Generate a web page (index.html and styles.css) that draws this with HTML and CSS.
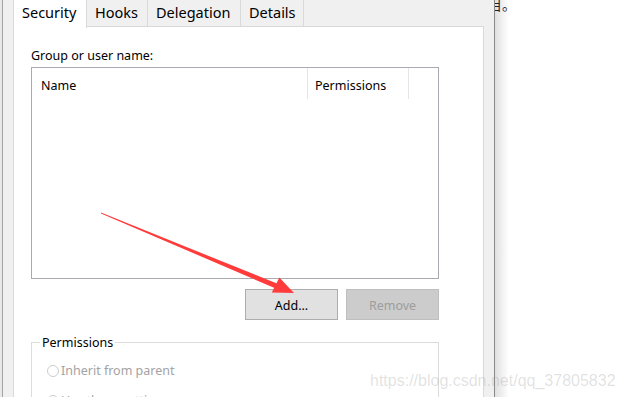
FILE: index.html
```html
<!DOCTYPE html>
<html lang="en">
<head>
<meta charset="utf-8">
<title>Security</title>
<link rel="stylesheet" href="styles.css">
</head>
<body>
<div class="screen">
  <div class="window">
    <div class="tabs">
      <div class="tab tab-active">Security</div>
      <div class="tab">Hooks</div>
      <div class="tab">Delegation</div>
      <div class="tab">Details</div>
    </div>
    <div class="panel">
      <div class="label">Group or user name:</div>
      <div class="listbox">
        <div class="list-header">
          <div class="col col-name">Name</div>
          <div class="col col-perm">Permissions</div>
          <div class="col col-rest"></div>
        </div>
      </div>
      <div class="buttons">
        <button class="btn">Add...</button>
        <button class="btn btn-disabled" disabled>Remove</button>
      </div>
      <fieldset class="group">
        <legend>Permissions</legend>
        <div class="radio-row"><span class="radio"></span><span>Inherit from parent</span></div>
        <div class="radio-row"><span class="radio"></span><span>Use these settings</span></div>
      </fieldset>
    </div>
  </div>
  <div class="outside">
    <div class="doc-text">目。</div>
  </div>
  <svg class="arrow" width="622" height="397" viewBox="0 0 622 397">
    <polygon fill="#ff3b3b" points="101,212.6 101,213.4 277.5,289.3 279.5,284.5"/>
    <polygon fill="#ff3b3b" points="294,293 271.8,292.4 279.4,277.6"/>
  </svg>
  <div class="watermark">https://blog.csdn.net/qq_37805832</div>
</div>
</body>
</html>
```

FILE: styles.css
```css
* { box-sizing: border-box; }
html, body { margin: 0; padding: 0; background: #fff; }
.screen {
  position: relative;
  width: 622px;
  height: 397px;
  overflow: hidden;
  display: flex;
  font-family: "Noto Sans", "Segoe UI", sans-serif;
  color: #000;
}
.window {
  position: relative;
  z-index: 2;
  flex: 0 0 493px;
  margin-left: 2px;
  height: 100%;
  background: #f0f0f0;
  border-left: 1px solid #a3a3a3;
  border-right: 1px solid #8a8a8a;
  box-shadow: -2px 0 0 #e8e8e8;
  padding: 0 10px 0 10px;
  display: flex;
  flex-direction: column;
}
.window::after {
  content: "";
  position: absolute;
  top: 0;
  bottom: 0;
  right: -15px;
  width: 14px;
  background: linear-gradient(to right, rgba(0,0,0,0.12), rgba(0,0,0,0));
}
.tabs {
  display: flex;
  height: 28px;
  margin-top: -2px;
}
.tab {
  height: 29px;
  padding: 0 8px;
  font-size: 14.5px;
  line-height: 26px;
  background: #f0f0f0;
  border: 1px solid #d9d9d9;
  border-left: none;
  color: #000;
  white-space: nowrap;
}
.tab:nth-child(2) { width: 61px; }
.tab:nth-child(3) { width: 93px; }
.tab:nth-child(4) { width: 63px; }
.tab-active {
  width: 74px;
  background: #fff;
  border-left: 1px solid #d9d9d9;
  border-bottom: none;
  height: 30px;
  position: relative;
  z-index: 1;
}
.panel {
  flex: 1;
  background: #fff;
  border: 1px solid #d9d9d9;
  padding: 21px 0 0 17px;
}
.label {
  font-size: 12.5px;
  line-height: 16px;
}
.listbox {
  margin-top: 3px;
  width: 408px;
  height: 212px;
  border: 1px solid #a9abb0;
}
.list-header {
  display: flex;
  height: 31px;
  font-size: 12.5px;
}
.col {
  line-height: 31px;
  padding-top: 2px;
  border-right: 1px solid #e5e5e5;
}
.col-name { width: 276px; padding-left: 9px; }
.col-perm { width: 101px; padding-left: 7px; }
.col-rest { border-right: none; flex: 1; }
.buttons {
  width: 408px;
  display: flex;
  justify-content: flex-end;
  gap: 8px;
  margin-top: 10px;
}
.btn {
  width: 93px;
  height: 31px;
  padding: 1px 0 0 0;
  margin: 0;
  font-family: inherit;
  font-size: 12.5px;
  color: #000;
  background: #e1e1e1;
  border: 1px solid #adadad;
}
.btn-disabled {
  background: #cccccc;
  border-color: #bfbfbf;
  color: #9d9d9d;
}
.group {
  width: 408px;
  margin: 14px 0 0 0;
  padding: 0 8px 0 8px;
  border: 1px solid #dcdcdc;
  min-width: 0;
}
.group legend {
  font-size: 12.5px;
  line-height: 16px;
  padding: 1px 2px 0 2px;
}
.radio-row {
  display: flex;
  align-items: center;
  gap: 2px;
  margin-top: 10px;
  margin-left: 7px;
  font-size: 12.5px;
  line-height: 20px;
  color: #a3a3a3;
}
.radio-row + .radio-row { margin-top: 10px; }
.radio {
  width: 12px;
  height: 12px;
  border: 1px solid #cdcdcd;
  border-radius: 50%;
  background: #fff;
}
.outside {
  flex: 1;
  position: relative;
}
.doc-text {
  margin: -3px 0 0 -7px;
  font-family: "Noto Sans CJK SC", sans-serif;
  font-size: 14px;
  line-height: 14px;
  color: #1f2633;
}
.arrow {
  position: absolute;
  left: 0;
  top: 0;
  z-index: 3;
  pointer-events: none;
}
.watermark {
  position: absolute;
  z-index: 4;
  left: 370px;
  top: 372px;
  font-family: "Liberation Sans", Arial, sans-serif;
  font-size: 16px;
  line-height: 18px;
  color: rgba(150, 150, 150, 0.28);
  white-space: nowrap;
}
```
